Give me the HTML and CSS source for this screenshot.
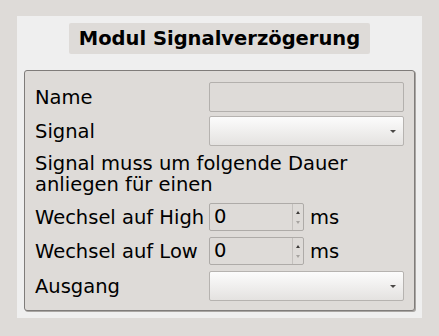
FILE: index.html
```html
<!DOCTYPE html>
<html lang="de">
  <head>
    <meta charset="UTF-8" />
    <title>Modul Signalverzögerung</title>
    <link rel="stylesheet" href="styles.css">
  </head>
  <body>
    <div class="panel">
      <div class="panel-title">Modul Signalverzögerung</div>
      <div class="group">
        <div class="row row-name">
          <span class="row-label">Name</span>
          <div class="line-edit"></div>
        </div>
        <div class="row row-signal">
          <span class="row-label">Signal</span>
          <div class="combo"><span class="combo-arrow"></span></div>
        </div>
        <div class="note">Signal muss um folgende Dauer<br>anliegen für einen</div>
        <div class="row row-high">
          <span class="row-label">Wechsel auf High</span>
          <div class="spin">
            <span class="spin-value">0</span>
            <span class="spin-buttons">
              <span class="spin-up"></span>
              <span class="spin-down"></span>
            </span>
          </div>
          <span class="unit">ms</span>
        </div>
        <div class="row row-low">
          <span class="row-label">Wechsel auf Low</span>
          <div class="spin">
            <span class="spin-value">0</span>
            <span class="spin-buttons">
              <span class="spin-up"></span>
              <span class="spin-down"></span>
            </span>
          </div>
          <span class="unit">ms</span>
        </div>
        <div class="row row-out">
          <span class="row-label">Ausgang</span>
          <div class="combo"><span class="combo-arrow"></span></div>
        </div>
      </div>
    </div>
  </body>
</html>
```

FILE: styles.css
```css
body {
  margin: 0;
  padding: 16px 17px 0;
  background-color: #dedbd8;
  font-family: "DejaVu Sans", sans-serif;
  font-size: 19.5px;
  line-height: 21px;
  color: #000;
}
.panel {
  background-color: #efefef;
  padding: 7px 7px 7px;
  display: flex;
  flex-direction: column;
  align-items: center;
}
.panel-title {
  background-color: #dedbd8;
  font-weight: bold;
  height: 31px;
  line-height: 31px;
  padding: 0 10px;
  border-radius: 2px;
}
.group {
  align-self: stretch;
  margin-top: 16px;
  border: 1px solid #7f7c7a;
  border-radius: 3px;
  box-shadow: 1px 1px 0 #a9a6a3;
  background-color: #dedbd8;
  padding: 11px 10px 9px;
  display: flex;
  flex-direction: column;
}
.row {
  display: flex;
  align-items: center;
  height: 30px;
}
.row-signal {
  margin-top: 4px;
}
.row-high {
  margin-top: 8px;
  height: 28px;
}
.row-low {
  margin-top: 6px;
  height: 28px;
}
.row-out {
  margin-top: 6px;
}
.row-label {
  width: 174px;
  flex: none;
  white-space: nowrap;
}
.note {
  margin-top: 7px;
}
.line-edit {
  flex: 1;
  height: 100%;
  box-sizing: border-box;
  border: 1px solid #b3b0ad;
  border-radius: 2px;
  background-color: #dedbd8;
}
.combo {
  flex: 1;
  height: 100%;
  box-sizing: border-box;
  border: 1px solid #b6b3b0;
  border-radius: 2px;
  background: linear-gradient(#fcfcfc, #e4e2e0);
  position: relative;
}
.combo-arrow {
  position: absolute;
  right: 7px;
  top: 13px;
  width: 0;
  height: 0;
  border-left: 3px solid transparent;
  border-right: 3px solid transparent;
  border-top: 3px solid #4a4846;
}
.spin {
  width: 95px;
  height: 100%;
  box-sizing: border-box;
  border: 1px solid #aeaba8;
  border-radius: 2px;
  background-color: #dedbd8;
  display: flex;
}
.spin-value {
  flex: 1;
  padding-left: 4px;
  line-height: 26px;
}
.spin-buttons {
  width: 10px;
  border-left: 1px solid #c4c1be;
  display: flex;
  flex-direction: column;
  align-items: center;
  justify-content: space-between;
  padding: 7px 0 6px;
}
.spin-up {
  width: 0;
  height: 0;
  border-left: 2px solid transparent;
  border-right: 2px solid transparent;
  border-bottom: 3px solid #3c3a38;
}
.spin-down {
  width: 0;
  height: 0;
  border-left: 2px solid transparent;
  border-right: 2px solid transparent;
  border-top: 3px solid #a6a3a0;
}
.unit {
  margin-left: 6px;
}
```
